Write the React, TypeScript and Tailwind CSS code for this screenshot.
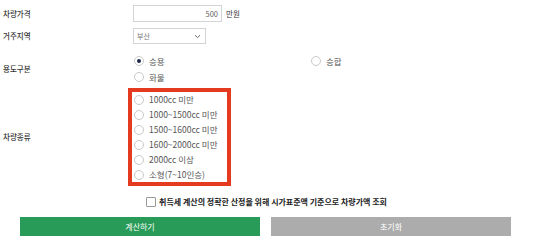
import React from "react";

const font = "font-['Noto_Sans_CJK_KR','Noto_Sans',sans-serif]";

function Radio({ label, checked = false }: { label: string; checked?: boolean }) {
  return (
    <div className="flex items-center h-[15px]">
      <span className="w-[10px] h-[10px] rounded-full border border-[#c9c9c9] bg-white flex items-center justify-center shrink-0">
        {checked && <span className="w-[4px] h-[4px] rounded-full bg-[#1d2a4a]" />}
      </span>
      <span className="ml-[5px] text-[8.5px] leading-none text-[#555]">{label}</span>
    </div>
  );
}

function Label({ children }: { children: React.ReactNode }) {
  return (
    <div className="w-[133px] pl-[3px] text-[7.5px] leading-none font-medium text-[#333] shrink-0">
      {children}
    </div>
  );
}

export default function App() {
  return (
    <div className={`w-[533px] h-[241px] bg-white ${font}`}>
      <div className="pt-[5px]">
        <div className="flex items-center h-[17px]">
          <Label>차량가격</Label>
          <div className="w-[89px] h-[17px] border border-[#d4d4d4] flex items-center justify-end pr-[3px] text-[7.5px] text-[#666]">
            500
          </div>
          <span className="ml-[4px] text-[7.5px] text-[#333] leading-none">만원</span>
        </div>
        <div className="flex items-center h-[16px] mt-[6px]">
          <Label>거주지역</Label>
          <div className="w-[73px] h-[16px] border border-[#d4d4d4] flex items-center justify-between pl-[3px] pr-[4px] text-[7px] text-[#777]">
            <span>부산</span>
            <svg width="7" height="5" viewBox="0 0 7 5">
              <path d="M1 1.2 L3.5 3.6 L6 1.2" fill="none" stroke="#666" strokeWidth="1" />
            </svg>
          </div>
        </div>
        <div className="flex items-center mt-[9px]">
          <Label>용도구분</Label>
          <div className="grid grid-cols-[177px_1fr] pl-[1px]">
            <div className="flex items-center h-[16px]"><Radio label="승용" checked /></div>
            <div className="flex items-center h-[16px]"><Radio label="승합" /></div>
            <div className="flex items-center h-[16px]"><Radio label="화물" /></div>
          </div>
        </div>
        <div className="flex items-center mt-[3px]">
          <Label>차량종류</Label>
          <div className="-ml-[5px] w-[103px] h-[98px] border-[4px] border-[#e43a20] pl-[2px]">
            <Radio label="1000cc 미만" />
            <Radio label="1000~1500cc 미만" />
            <Radio label="1500~1600cc 미만" />
            <Radio label="1600~2000cc 미만" />
            <Radio label="2000cc 이상" />
            <Radio label="소형(7~10인승)" />
          </div>
        </div>
        <div className="flex items-center justify-center h-[12px] mt-[10px]">
          <span className="w-[10px] h-[10px] border border-[#999] rounded-[1px] bg-white" />
          <span className="ml-[3px] text-[8px] font-bold text-[#222] leading-none">
            취득세 계산의 정확한 산정을 위해 시가표준액 기준으로 차량가액 조회
          </span>
        </div>
        <div className="flex gap-[11px] pl-[20px] mt-[9px]">
          <button className="w-[240px] h-[19px] bg-[#279b57] text-white text-[8px] leading-none">계산하기</button>
          <button className="w-[240px] h-[19px] bg-[#acacac] text-white text-[8px] leading-none">초기화</button>
        </div>
      </div>
    </div>
  );
}
